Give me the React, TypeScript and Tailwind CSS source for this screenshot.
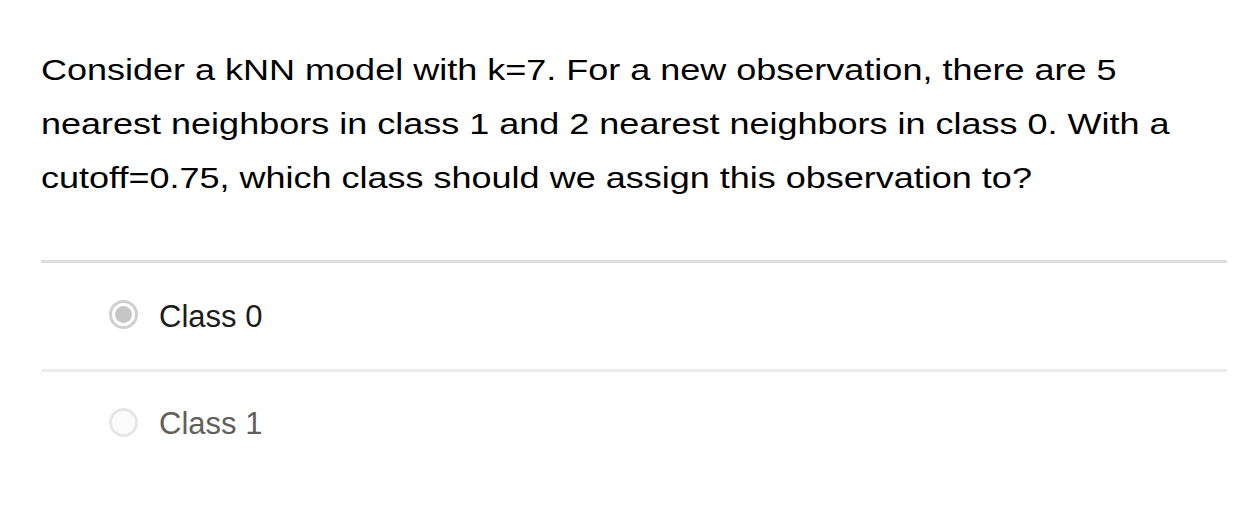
import React from 'react';

const options = [
    { label: 'Class 0', checked: true },
    { label: 'Class 1', checked: false },
];

function Radio({ checked }: { checked: boolean }) {
    if (checked) {
        return (
            <span className="mb-[5px] flex h-[29px] w-[29px] shrink-0 items-center justify-center rounded-full border-[3px] border-[#cfcfcf] bg-white">
                <span className="h-[17px] w-[17px] rounded-full bg-[#c6c6c6]" />
            </span>
        );
    }
    return <span className="mb-[5px] h-[29px] w-[29px] shrink-0 rounded-full border-[3px] border-[#e6e6e6] bg-[#fbfbfb]" />;
}

export default function App() {
    return (
        <div className="min-h-screen w-full bg-white pl-[41px] pr-[29px] pt-[43px]" style={{ fontFamily: "'Liberation Sans', Arial, sans-serif" }}>
            {/* the question glyphs are stretched wide in the original */}
            <p className="w-[988px] origin-left scale-x-[1.2] text-[30px] leading-[54px] text-black">
                Consider a kNN model with k=7. For a new observation, there are 5 nearest neighbors in class 1 and 2 nearest
                neighbors in class 0. With a cutoff=0.75, which class should we assign this observation to?
            </p>
            <div className="mt-[55px] border-t-[3px] border-[#dedede]">
                {options.map((o, i) => (
                    <label
                        key={o.label}
                        className={
                            'flex h-[106px] items-center gap-[21px] pl-[68px] pt-[2px] ' + (i > 0 ? 'border-t-[3px] border-[#ececec]' : '')
                        }
                    >
                        <Radio checked={o.checked} />
                        <span className={'text-[31px] ' + (o.checked ? 'text-[#1c1c1c]' : 'text-[#635e5a]')}>{o.label}</span>
                    </label>
                ))}
            </div>
        </div>
    );
}
